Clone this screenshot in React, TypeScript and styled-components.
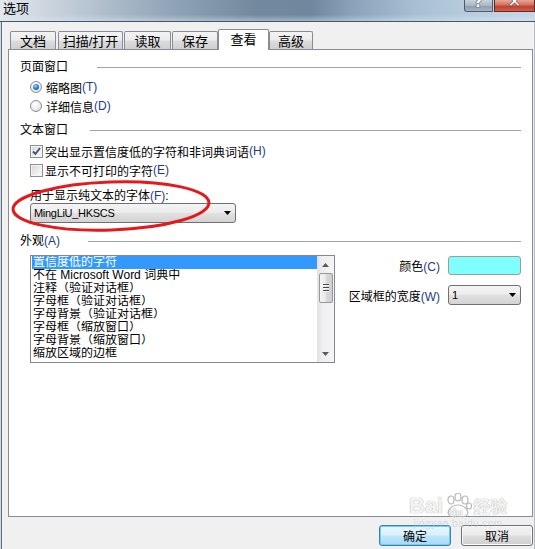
import React from 'react';
import styled, { createGlobalStyle } from 'styled-components';

const Global = createGlobalStyle`
  html, body { margin: 0; padding: 0; background: #f0f0f0; }
  body {
    width: 535px; height: 549px; overflow: hidden;
    font-family: "Liberation Sans", "Noto Sans CJK SC", sans-serif;
    font-size: 12px; color: #000;
  }
  * { box-sizing: border-box; }
`;

const Window = styled.div`
  position: relative;
  width: 535px;
  height: 549px;
  display: flex;
  flex-direction: column;
  overflow: hidden;
`;

const TitleBar = styled.div`
  height: 22px;
  flex: none;
  display: flex;
  align-items: flex-start;
  border-bottom: 1px solid #44566a;
  background:
    linear-gradient(180deg, rgba(255,255,255,0) 70%, rgba(220,232,244,0.45) 100%),
    linear-gradient(90deg, #e2e8ee 0%, #c3ced9 12%, #95a8ba 30%, #72889e 48%, #6f879e 58%, #8aa3ba 66%, #a9c0d4 78%, #bccfe0 90%, #c6d6e6 100%);
`;

const Title = styled.div`
  padding: 1px 0 0 3px;
  font-size: 13px;
  line-height: 15px;
  color: #000;
`;

const Caption = styled.div`
  margin-left: auto;
  display: flex;
  gap: 1px;
`;

const CaptionBtn = styled.div<{ $close?: boolean }>`
  width: ${p => (p.$close ? 41 : 29)}px;
  height: 12px;
  overflow: hidden;
  display: flex;
  justify-content: center;
  border: 1px solid ${p => (p.$close ? '#5b2b26' : '#4c5c6e')};
  border-top: none;
  border-radius: ${p => (p.$close ? '0' : '0 0 0 3px')};
  background: ${p =>
    p.$close
      ? 'linear-gradient(180deg, #e8a898 0%, #d2705f 45%, #c2402f 60%, #d0604c 100%)'
      : 'linear-gradient(180deg, #c8d3de 0%, #a9b6c4 50%, #8e9daf 60%, #a8b7c7 100%)'};
  color: #fff;
  font-family: "DejaVu Sans", sans-serif;
  font-weight: bold;
  font-size: 16px;
  line-height: 16px;
  text-shadow: 0 0 1px #222, 0 0 1px #222;
`;

const Glyph = styled.span`
  display: block;
  margin-top: -6px;
`;

const Body = styled.div`
  flex: 1;
  display: flex;
  flex-direction: column;
  background: #f0f0f0;
  border-left: 1px solid #d0d8e0;
  border-right: 1px solid #b4bcc6;
  box-shadow: inset 1px 0 0 #5d6e82;
  padding: 7px 1px 0 7px;
`;

const TabStrip = styled.div`
  position: relative;
  z-index: 1;
  height: 20px;
  display: flex;
  align-items: flex-end;
  padding-left: 2px;
`;

const Tab = styled.div<{ $w: number; $ml: number; $active?: boolean }>`
  width: ${p => p.$w}px;
  margin-left: ${p => p.$ml}px;
  height: ${p => (p.$active ? 21 : 18)}px;
  margin-bottom: ${p => (p.$active ? -1 : 0)}px;
  padding-bottom: ${p => (p.$active ? 3 : 1)}px;
  border: 1px solid #898c95;
  border-bottom: ${p => (p.$active ? 'none' : '0')};
  border-radius: 2px 2px 0 0;
  background: ${p =>
    p.$active
      ? '#ffffff'
      : 'linear-gradient(180deg, #f3f3f3 0%, #ebebeb 48%, #dddddd 52%, #cfcfcf 100%)'};
  font-size: 13px;
  display: flex;
  align-items: center;
  justify-content: center;
  white-space: nowrap;
`;

const Panel = styled.div`
  position: relative;
  height: 468px;
  flex: none;
  background: #fff;
  border: 1px solid #898c95;
  padding: 0 11px;
  display: flex;
  flex-direction: column;
`;

const GroupHeader = styled.div<{ $mt: number }>`
  display: flex;
  align-items: center;
  height: 16px;
  margin-top: ${p => p.$mt}px;
`;

const GroupLabel = styled.span<{ $w: number }>`
  width: ${p => p.$w}px;
  flex: none;
  line-height: 16px;
  white-space: nowrap;
`;

const GroupLine = styled.div`
  flex: 1;
  height: 1px;
  background: #a4a4a4;
`;

const Key = styled.span`
  color: #233a88;
`;

const OptionRow = styled.div<{ $mt: number }>`
  display: flex;
  align-items: center;
  height: 16px;
  margin-top: ${p => p.$mt}px;
  padding-left: 10px;
  white-space: nowrap;
`;

const Radio = styled.span<{ $on?: boolean }>`
  width: 12px;
  height: 12px;
  flex: none;
  margin-right: 4px;
  border-radius: 50%;
  border: 1px solid #8e8f8f;
  background: radial-gradient(circle at 40% 35%, #ffffff 0%, #ececec 55%, #cfcfcf 100%);
  display: flex;
  align-items: center;
  justify-content: center;
  &::after {
    content: '';
    display: ${p => (p.$on ? 'block' : 'none')};
    width: 6px;
    height: 6px;
    border-radius: 50%;
    background: radial-gradient(circle at 40% 35%, #9ad6ff 0%, #2d7fc4 50%, #0c4680 100%);
  }
`;

const Check = styled.span`
  width: 13px;
  height: 13px;
  flex: none;
  margin-right: 2px;
  border: 1px solid #8e8f8f;
  box-shadow: inset 0 0 0 1px #f4f4f4;
  background: linear-gradient(135deg, #d6d6d6 0%, #f2f2f2 70%, #fafafa 100%);
  display: flex;
  align-items: center;
  justify-content: center;
`;

const FieldLabel = styled.div<{ $mt: number }>`
  height: 14px;
  line-height: 14px;
  margin-top: ${p => p.$mt}px;
  padding-left: 10px;
  white-space: nowrap;
`;

const Combo = styled.div<{ $w: number; $ml?: number }>`
  width: ${p => p.$w}px;
  height: 20px;
  flex: none;
  margin-left: ${p => p.$ml ?? 0}px;
  border: 1px solid #707070;
  border-radius: 3px;
  background: linear-gradient(180deg, #f4f4f4 0%, #ececec 48%, #e0e0e0 52%, #d3d3d3 100%);
  display: flex;
  align-items: center;
  justify-content: space-between;
  padding: 0 4px 0 3px;
  font-size: 11px;
  letter-spacing: -0.3px;
  white-space: nowrap;
`;

const AppearanceRow = styled.div`
  display: flex;
  align-items: flex-start;
  margin-top: 6px;
`;

const ListBox = styled.div`
  margin-left: 10px;
  width: 305px;
  height: 108px;
  flex: none;
  border: 1px solid #828790;
  display: flex;
  background: #fff;
`;

const Items = styled.div`
  flex: 1;
  padding-left: 1px;
  overflow: hidden;
`;

const Item = styled.div<{ $sel?: boolean }>`
  height: 13px;
  line-height: 13px;
  padding-left: 1px;
  white-space: nowrap;
  overflow: hidden;
  background: ${p => (p.$sel ? '#3399ff' : 'transparent')};
  color: ${p => (p.$sel ? '#ffffff' : '#000000')};
`;

const ScrollBar = styled.div`
  width: 17px;
  flex: none;
  display: flex;
  flex-direction: column;
  align-items: center;
  background: linear-gradient(90deg, #e2e2e2 0%, #eeeeee 30%, #f5f5f5 100%);
`;

const ScrollArrow = styled.div`
  height: 17px;
  width: 17px;
  flex: none;
  display: flex;
  align-items: center;
  justify-content: center;
`;

const Thumb = styled.div`
  width: 14px;
  height: 30px;
  flex: none;
  border: 1px solid #979797;
  border-radius: 2px;
  background: linear-gradient(90deg, #f4f4f4 0%, #e9e9e9 48%, #d9d9d9 52%, #cfcfcf 100%);
  display: flex;
  flex-direction: column;
  align-items: center;
  justify-content: center;
  gap: 1px;
`;

const Grip = styled.span`
  width: 6px;
  height: 1px;
  background: #4a4a4a;
  box-shadow: 0 1px 0 #f8f8f8;
  margin-bottom: 1px;
`;

const Spacer = styled.div`
  flex: 1;
`;

const SideGrid = styled.div`
  flex: 1;
  margin-top: 1px;
  display: grid;
  grid-template-columns: 1fr 73px;
  grid-template-rows: 19px 20px;
  column-gap: 8px;
  row-gap: 10px;
  align-items: center;
`;

const SideLabel = styled.div`
  text-align: right;
  white-space: nowrap;
`;

const Swatch = styled.div<{ $color: string }>`
  height: 19px;
  border: 1px solid #9c9c9c;
  border-radius: 3px;
  background: ${p => p.$color};
`;

const ButtonRow = styled.div`
  margin-top: 8px;
  display: flex;
  justify-content: flex-end;
  gap: 10px;
`;

const Button = styled.div<{ $default?: boolean }>`
  width: 72px;
  height: 21px;
  border-radius: 3px;
  border: 1px solid ${p => (p.$default ? '#3c7fb1' : '#707070')};
  box-shadow: ${p => (p.$default ? 'inset 0 0 0 1px #6fd0f7' : 'inset 0 0 0 1px #fbfbfb')};
  background: ${p =>
    p.$default
      ? 'linear-gradient(180deg, #eaf6fd 0%, #d9f0fc 48%, #bee6fd 52%, #a7d9f5 100%)'
      : 'linear-gradient(180deg, #f2f2f2 0%, #ebebeb 48%, #dddddd 52%, #cfcfcf 100%)'};
  display: flex;
  align-items: center;
  justify-content: center;
  font-size: 12px;
`;

const Watermark = styled.div`
  position: absolute;
  left: 409px;
  top: 493px;
  display: flex;
  flex-direction: column;
  align-items: center;
  pointer-events: none;
  color: rgba(255, 255, 255, 0.85);
`;

const WaterLogo = styled.div`
  display: flex;
  align-items: center;
  font-family: "Liberation Sans", sans-serif;
  font-size: 22px;
  font-weight: bold;
  line-height: 26px;
  text-shadow: 0 0 1px #b8b8b8, 0 0 1px #b8b8b8;
`;

const Paw = styled.span`
  position: relative;
  width: 30px;
  height: 26px;
  display: inline-flex;
  align-items: flex-end;
  justify-content: center;
`;

const PawText = styled.span`
  position: absolute;
  bottom: 1px;
  left: 6px;
  font-size: 11px;
  line-height: 12px;
`;

const WaterCn = styled.span`
  font-family: "Noto Sans CJK SC", sans-serif;
  font-size: 17px;
`;

const WaterUrl = styled.div`
  font-family: "Liberation Sans", sans-serif;
  font-size: 10px;
  line-height: 10px;
  color: rgba(190, 200, 210, 0.55);
  letter-spacing: 0.5px;
`;

const Annotation = styled.svg`
  position: absolute;
  left: 0;
  top: 0;
  pointer-events: none;
`;

const DownArrow = () => (
  <svg width="7" height="4" viewBox="0 0 7 4">
    <path d="M0 0H7L3.5 4Z" fill="#000" />
  </svg>
);

const ScrollTri = ({ up }: { up?: boolean }) => (
  <svg width="7" height="4" viewBox="0 0 7 4">
    <path d={up ? 'M0 4H7L3.5 0Z' : 'M0 0H7L3.5 4Z'} fill="#5a5a5a" />
  </svg>
);

const CheckMark = () => (
  <svg width="9" height="9" viewBox="0 0 9 9">
    <path d="M1 4.5L3.5 7L8 1" fill="none" stroke="#3d4f7c" strokeWidth="1.8" />
  </svg>
);

const tabs = [
  { label: '文档', w: 46, ml: 0 },
  { label: '扫描/打开', w: 65, ml: 2 },
  { label: '读取', w: 47, ml: 1 },
  { label: '保存', w: 46, ml: 1 },
  { label: '查看', w: 51, ml: 0, active: true },
  { label: '高级', w: 44, ml: 0 },
];

const items = [
  '置信度低的字符',
  '不在 Microsoft Word 词典中',
  '注释（验证对话框）',
  '字母框（验证对话框）',
  '字母背景（验证对话框）',
  '字母框（缩放窗口）',
  '字母背景（缩放窗口）',
  '缩放区域的边框',
];

export default function App() {
  return (
    <Window>
      <Global />
      <TitleBar>
        <Title>选项</Title>
        <Caption>
          <CaptionBtn><Glyph>?</Glyph></CaptionBtn>
          <CaptionBtn $close><Glyph>✕</Glyph></CaptionBtn>
        </Caption>
      </TitleBar>
      <Body>
        <TabStrip>
          {tabs.map(t => (
            <Tab key={t.label} $w={t.w} $ml={t.ml} $active={t.active}>
              {t.label}
            </Tab>
          ))}
        </TabStrip>
        <Panel>
          <GroupHeader $mt={9}>
            <GroupLabel $w={77}>页面窗口</GroupLabel>
            <GroupLine />
          </GroupHeader>
          <OptionRow $mt={4}>
            <Radio $on />
            缩略图<Key>(T)</Key>
          </OptionRow>
          <OptionRow $mt={3}>
            <Radio />
            详细信息<Key>(D)</Key>
          </OptionRow>
          <GroupHeader $mt={8}>
            <GroupLabel $w={70}>文本窗口</GroupLabel>
            <GroupLine />
          </GroupHeader>
          <OptionRow $mt={5}>
            <Check><CheckMark /></Check>
            突出显示置信度低的字符和非词典词语<Key>(H)</Key>
          </OptionRow>
          <OptionRow $mt={3}>
            <Check />
            显示不可打印的字符<Key>(E)</Key>
          </OptionRow>
          <FieldLabel $mt={11}>
            用于显示纯文本的字体<Key>(F)</Key>:
          </FieldLabel>
          <Combo $w={206} $ml={10}>
            <span>MingLiU_HKSCS</span>
            <DownArrow />
          </Combo>
          <GroupHeader $mt={10}>
            <GroupLabel $w={68}>外观<Key>(A)</Key></GroupLabel>
            <GroupLine />
          </GroupHeader>
          <AppearanceRow>
            <ListBox>
              <Items>
                {items.map((it, i) => (
                  <Item key={it} $sel={i === 0}>{it}</Item>
                ))}
              </Items>
              <ScrollBar>
                <ScrollArrow><ScrollTri up /></ScrollArrow>
                <Thumb>
                  <Grip />
                  <Grip />
                  <Grip />
                </Thumb>
                <Spacer />
                <ScrollArrow><ScrollTri /></ScrollArrow>
              </ScrollBar>
            </ListBox>
            <SideGrid>
              <SideLabel>颜色<Key>(C)</Key></SideLabel>
              <Swatch $color="#80ffff" />
              <SideLabel>区域框的宽度<Key>(W)</Key></SideLabel>
              <Combo $w={73}>
                <span>1</span>
                <DownArrow />
              </Combo>
            </SideGrid>
          </AppearanceRow>
        </Panel>
        <ButtonRow>
          <Button $default>确定</Button>
          <Button>取消</Button>
        </ButtonRow>
      </Body>
      <Watermark>
        <WaterLogo>
          Bai
          <Paw>
            <svg width="30" height="26" viewBox="0 0 30 26">
              <g fill="none" stroke="#b8b8b8" strokeWidth="1.2">
                <ellipse cx="8" cy="7" rx="3" ry="4" />
                <ellipse cx="15" cy="4" rx="3" ry="4" />
                <ellipse cx="22" cy="7" rx="3" ry="4" />
                <ellipse cx="26" cy="13" rx="2.5" ry="3" />
                <path d="M6 22C3 18 9 12 15 12C21 12 27 18 24 22C22 25 18 23 15 23C12 23 8 25 6 22Z" />
              </g>
            </svg>
            <PawText>du</PawText>
          </Paw>
          <WaterCn>经验</WaterCn>
        </WaterLogo>
        <WaterUrl>jingyan.baidu.com</WaterUrl>
      </Watermark>
      <Annotation width="535" height="549" viewBox="0 0 535 549">
        <ellipse
          cx="111"
          cy="206"
          rx="98"
          ry="24"
          transform="rotate(-2 111 206)"
          fill="none"
          stroke="#e3191d"
          strokeWidth="3"
        />
      </Annotation>
    </Window>
  );
}
